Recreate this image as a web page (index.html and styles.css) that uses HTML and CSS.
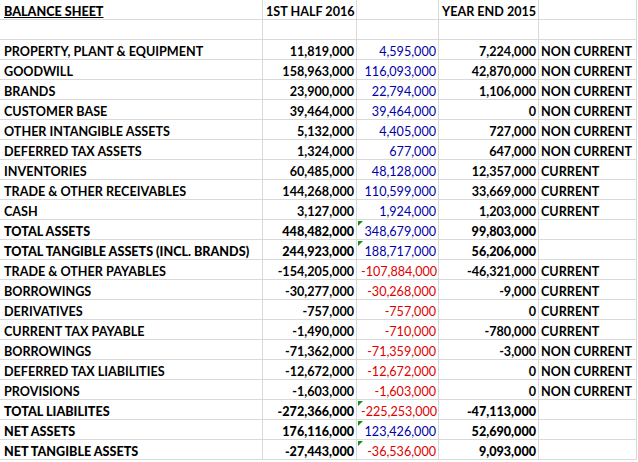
FILE: index.html
```html
<!DOCTYPE html>
<html>
<head>
<meta charset="utf-8">
<link rel="stylesheet" href="styles.css">
</head>
<body>
<div class="sheet">
  <div class="c a hdr"><span class="title">BALANCE SHEET</span></div>
  <div class="c l">1ST HALF 2016</div>
  <div class="c"></div>
  <div class="c l">YEAR END 2015</div>
  <div class="c"></div>

  <div class="c a"></div><div class="c"></div><div class="c"></div><div class="c"></div><div class="c"></div>

  <div class="c a">PROPERTY, PLANT &amp; EQUIPMENT</div><div class="c n">11,819,000</div><div class="c n blue">4,595,000</div><div class="c n">7,224,000</div><div class="c t">NON CURRENT</div>
  <div class="c a">GOODWILL</div><div class="c n">158,963,000</div><div class="c n blue">116,093,000</div><div class="c n">42,870,000</div><div class="c t">NON CURRENT</div>
  <div class="c a">BRANDS</div><div class="c n">23,900,000</div><div class="c n blue">22,794,000</div><div class="c n">1,106,000</div><div class="c t">NON CURRENT</div>
  <div class="c a">CUSTOMER BASE</div><div class="c n">39,464,000</div><div class="c n blue">39,464,000</div><div class="c n">0</div><div class="c t">NON CURRENT</div>
  <div class="c a">OTHER INTANGIBLE ASSETS</div><div class="c n">5,132,000</div><div class="c n blue">4,405,000</div><div class="c n">727,000</div><div class="c t">NON CURRENT</div>
  <div class="c a">DEFERRED TAX ASSETS</div><div class="c n">1,324,000</div><div class="c n blue">677,000</div><div class="c n">647,000</div><div class="c t">NON CURRENT</div>
  <div class="c a">INVENTORIES</div><div class="c n">60,485,000</div><div class="c n blue">48,128,000</div><div class="c n">12,357,000</div><div class="c t">CURRENT</div>
  <div class="c a">TRADE &amp; OTHER RECEIVABLES</div><div class="c n">144,268,000</div><div class="c n blue">110,599,000</div><div class="c n">33,669,000</div><div class="c t">CURRENT</div>
  <div class="c a">CASH</div><div class="c n">3,127,000</div><div class="c n blue">1,924,000</div><div class="c n">1,203,000</div><div class="c t">CURRENT</div>
  <div class="c a hv">TOTAL ASSETS</div><div class="c n hv">448,482,000</div><div class="c n blue flag">348,679,000</div><div class="c n hv">99,803,000</div><div class="c"></div>
  <div class="c a hv">TOTAL TANGIBLE ASSETS (INCL. BRANDS)</div><div class="c n hv">244,923,000</div><div class="c n blue flag">188,717,000</div><div class="c n hv">56,206,000</div><div class="c"></div>
  <div class="c a">TRADE &amp; OTHER PAYABLES</div><div class="c n">-154,205,000</div><div class="c n red">-107,884,000</div><div class="c n">-46,321,000</div><div class="c t">CURRENT</div>
  <div class="c a">BORROWINGS</div><div class="c n">-30,277,000</div><div class="c n red">-30,268,000</div><div class="c n">-9,000</div><div class="c t">CURRENT</div>
  <div class="c a">DERIVATIVES</div><div class="c n">-757,000</div><div class="c n red">-757,000</div><div class="c n">0</div><div class="c t">CURRENT</div>
  <div class="c a">CURRENT TAX PAYABLE</div><div class="c n">-1,490,000</div><div class="c n red">-710,000</div><div class="c n">-780,000</div><div class="c t">CURRENT</div>
  <div class="c a">BORROWINGS</div><div class="c n">-71,362,000</div><div class="c n red">-71,359,000</div><div class="c n">-3,000</div><div class="c t">NON CURRENT</div>
  <div class="c a">DEFERRED TAX LIABILITIES</div><div class="c n">-12,672,000</div><div class="c n red">-12,672,000</div><div class="c n">0</div><div class="c t">NON CURRENT</div>
  <div class="c a">PROVISIONS</div><div class="c n">-1,603,000</div><div class="c n red">-1,603,000</div><div class="c n">0</div><div class="c t">NON CURRENT</div>
  <div class="c a hv">TOTAL LIABILITES</div><div class="c n hv">-272,366,000</div><div class="c n red flag">-225,253,000</div><div class="c n hv">-47,113,000</div><div class="c"></div>
  <div class="c a hv">NET ASSETS</div><div class="c n hv">176,116,000</div><div class="c n blue flag">123,426,000</div><div class="c n hv">52,690,000</div><div class="c"></div>
  <div class="c a hv">NET TANGIBLE ASSETS</div><div class="c n hv">-27,443,000</div><div class="c n red flag">-36,536,000</div><div class="c n hv">9,093,000</div><div class="c"></div>
</div>
</body>
</html>
```
FILE: styles.css
```css
html, body {
  margin: 0;
  padding: 0;
  background: #ffffff;
}
.sheet {
  display: grid;
  grid-template-columns: 263px 94px 82px 100px 98px;
  grid-auto-rows: 20px;
  font-family: Lato, "Liberation Sans", sans-serif;
  font-size: 12.6px;
  font-weight: 700;
  color: #000;
}
.c {
  position: relative;
  box-sizing: border-box;
  border-right: 1px solid #d9d9d9;
  border-bottom: 1px solid #d9d9d9;
  padding: 2px 3px 0 4px;
  line-height: 19px;
  white-space: nowrap;
  overflow: visible;
}
.l { padding-left: 3px; }
.n { text-align: right; padding-right: 2px; }
.t { padding-left: 2px; }
.hv { font-weight: 900; }
.title {
  font-weight: 900;
  text-decoration: underline;
}
.blue { color: #0000a8; font-weight: 400; }
.red { color: #e00000; font-weight: 400; }
.flag::before {
  content: "";
  position: absolute;
  left: 1px;
  top: 1px;
  border-top: 5px solid #1f8a1f;
  border-right: 5px solid transparent;
}
```
